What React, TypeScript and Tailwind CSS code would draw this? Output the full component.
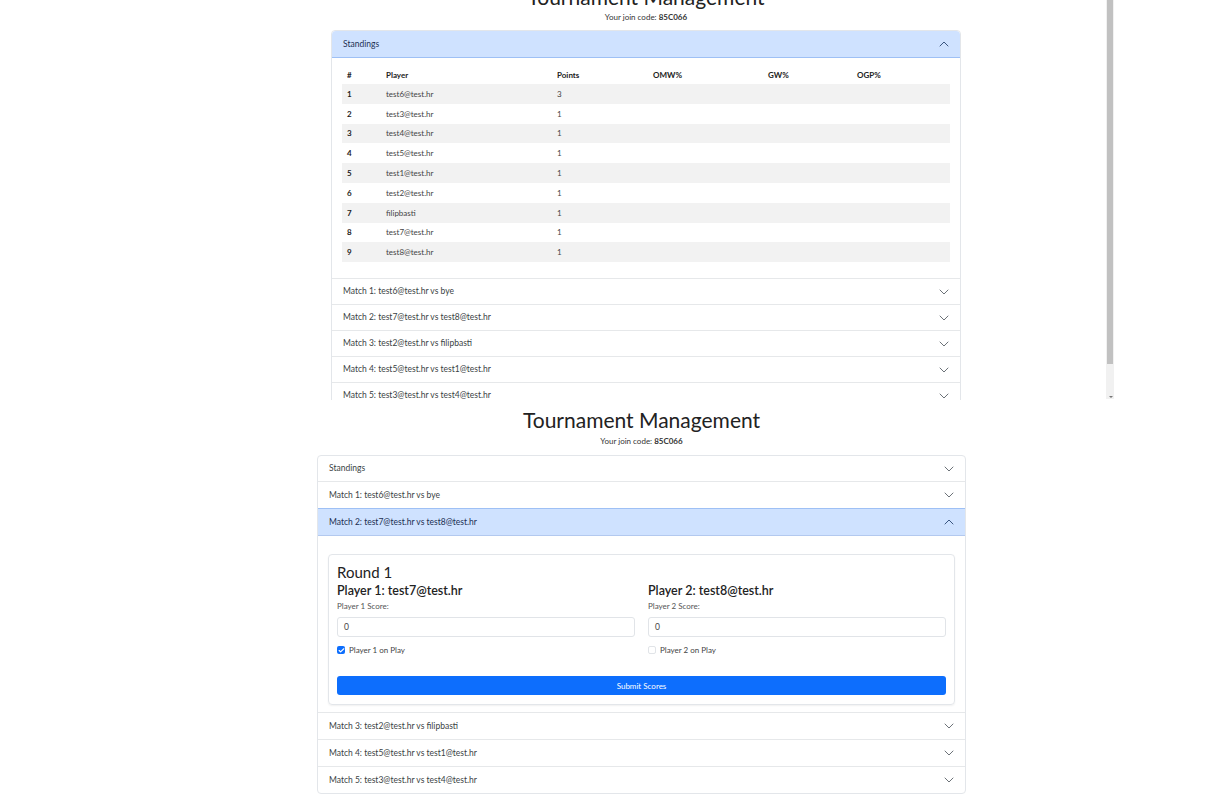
import { Check } from 'lucide-react'

const standings = [
  { rank: 1, player: 'test6@test.hr', points: 3 },
  { rank: 2, player: 'test3@test.hr', points: 1 },
  { rank: 3, player: 'test4@test.hr', points: 1 },
  { rank: 4, player: 'test5@test.hr', points: 1 },
  { rank: 5, player: 'test1@test.hr', points: 1 },
  { rank: 6, player: 'test2@test.hr', points: 1 },
  { rank: 7, player: 'filipbasti', points: 1 },
  { rank: 8, player: 'test7@test.hr', points: 1 },
  { rank: 9, player: 'test8@test.hr', points: 1 },
]

const matches = [
  'Match 1: test6@test.hr vs bye',
  'Match 2: test7@test.hr vs test8@test.hr',
  'Match 3: test2@test.hr vs filipbasti',
  'Match 4: test5@test.hr vs test1@test.hr',
  'Match 5: test3@test.hr vs test4@test.hr',
]

function Chevron({ up }: { up?: boolean }) {
  return (
    <svg width="10" height="6" viewBox="0 0 10 6" fill="none" className={up ? 'rotate-180' : ''}>
      <polyline points="1,1 5,5 9,1" stroke={up ? '#3a5680' : '#6c7278'} strokeWidth="1" strokeLinecap="round" strokeLinejoin="round" />
    </svg>
  )
}

function ItemHeader({ label, open, h }: { label: string; open?: boolean; h: string }) {
  return (
    <div
      className={`flex items-center justify-between pl-[11px] pr-[11px] ${h} ${
        open ? 'bg-[#cfe2ff] text-[#1b2f52]' : 'text-[#3a3f44]'
      }`}
    >
      <span>{label}</span>
      <Chevron up={open} />
    </div>
  )
}

function StandingsTable() {
  return (
    <table className="w-full text-[8px] text-[#222]">
      <thead>
        <tr className="h-[19px] font-bold">
          <td className="pl-[5px] w-[44px]">#</td>
          <td className="w-[171px]">Player</td>
          <td className="w-[96px]">Points</td>
          <td className="w-[115px]">OMW%</td>
          <td className="w-[89px]">GW%</td>
          <td>OGP%</td>
        </tr>
      </thead>
      <tbody>
        {standings.map((s, i) => (
          <tr key={s.rank} className={`h-[19.8px] ${i % 2 === 0 ? 'bg-[#f2f2f2]' : 'bg-white'}`}>
            <td className="pl-[5px] font-bold">{s.rank}</td>
            <td className="text-[#444]">{s.player}</td>
            <td className="text-[#444]">{s.points}</td>
            <td></td>
            <td></td>
            <td></td>
          </tr>
        ))}
      </tbody>
    </table>
  )
}

function TopShot() {
  return (
    <div className="relative h-[400px] w-full overflow-hidden">
      <div className="ml-[331px] w-[630px] -mt-[15px]">
        <h1 className="text-center text-[21px] leading-[24px] text-[#222]">Tournament Management</h1>
        <p className="mt-[2px] text-center text-[8px] leading-[12px] text-[#333]">
          Your join code: <b>85C066</b>
        </p>
        <div className="mt-[7px] rounded-[4px] border border-[#e3e6ea] text-[8.5px]">
          <div className="overflow-hidden rounded-t-[4px] border-b border-[#9ec0f5]">
            <ItemHeader label="Standings" open h="h-[26px]" />
          </div>
          <div className="px-[10px] pt-[7px] pb-[16px]">
            <StandingsTable />
          </div>
          {matches.map((m) => (
            <div key={m} className="border-t border-[#e6e8ea]">
              <ItemHeader label={m} h="h-[25px]" />
            </div>
          ))}
        </div>
      </div>
      {/* window scrollbar */}
      <div className="absolute left-[1106px] top-0 flex h-[399px] w-[8px] flex-col bg-[#f1f1f1]">
        <div className="ml-[1px] h-[364px] w-[6px] bg-[#c1c1c1]" />
        <div className="flex-1" />
        <div className="mb-[1px] ml-[3px] h-0 w-0 border-x-[2px] border-t-[2px] border-x-transparent border-t-[#777]" />
      </div>
    </div>
  )
}

function ScoreColumn({ n, player, checked }: { n: number; player: string; checked?: boolean }) {
  return (
    <div className="flex-1">
      <h3 className="text-[12.5px] leading-[16px] font-semibold text-[#222]">
        Player {n}: {player}
      </h3>
      <div className="mt-[1px] text-[8px] leading-[12px] text-[#555]">Player {n} Score:</div>
      <div className="mt-[5px] flex h-[20px] items-center rounded-[3px] border border-[#e1e4e8] px-[6px] text-[8.5px] text-[#444]">
        0
      </div>
      <label className="mt-[7px] flex items-center gap-[4px] text-[8px] text-[#444]">
        {checked ? (
          <span className="flex h-[8px] w-[8px] items-center justify-center rounded-[2px] bg-[#0d6efd]">
            <Check className="h-[7px] w-[7px] text-white" strokeWidth={4} />
          </span>
        ) : (
          <span className="h-[8px] w-[8px] rounded-[2px] border border-[#e1e4e8]" />
        )}
        Player {n} on Play
      </label>
    </div>
  )
}

function BottomShot() {
  return (
    <div className="ml-[317px] w-[649px] pt-[7px]">
      <h1 className="text-center text-[21px] leading-[26px] text-[#222]">Tournament Management</h1>
      <p className="mt-[2px] text-center text-[8px] leading-[12px] text-[#333]">
        Your join code: <b>85C066</b>
      </p>
      <div className="mt-[8px] rounded-[4px] border border-[#e3e6ea] text-[8.5px]">
        <ItemHeader label="Standings" h="h-[25px]" />
        <div className="border-t border-[#e6e8ea]">
          <ItemHeader label={matches[0]} h="h-[26px]" />
        </div>
        <div className="border-t border-[#9ec0f5] border-b border-b-[#b3c9ef]">
          <ItemHeader label={matches[1]} open h="h-[26px]" />
        </div>
        <div className="px-[10px] pt-[18px] pb-[7px]">
          <div className="rounded-[4px] border border-[#e3e6ea] px-[8px] pt-[8px] pb-[9px] shadow-[0_1px_2px_rgba(0,0,0,0.06)]">
            <h2 className="text-[15px] leading-[18px] text-[#222]">Round 1</h2>
            <div className="mt-[2px] flex gap-[13px]">
              <ScoreColumn n={1} player="test7@test.hr" checked />
              <ScoreColumn n={2} player="test8@test.hr" />
            </div>
            <button className="mt-[20px] h-[19px] w-full rounded-[3px] bg-[#0d6efd] text-[8px] text-white">
              Submit Scores
            </button>
          </div>
        </div>
        {matches.slice(2).map((m) => (
          <div key={m} className="border-t border-[#e6e8ea]">
            <ItemHeader label={m} h="h-[26px]" />
          </div>
        ))}
      </div>
    </div>
  )
}

export default function App() {
  return (
    <div className="min-h-[800px] w-[1224px] bg-white font-['Lato','Open_Sans',sans-serif]">
      <TopShot />
      <BottomShot />
    </div>
  )
}
